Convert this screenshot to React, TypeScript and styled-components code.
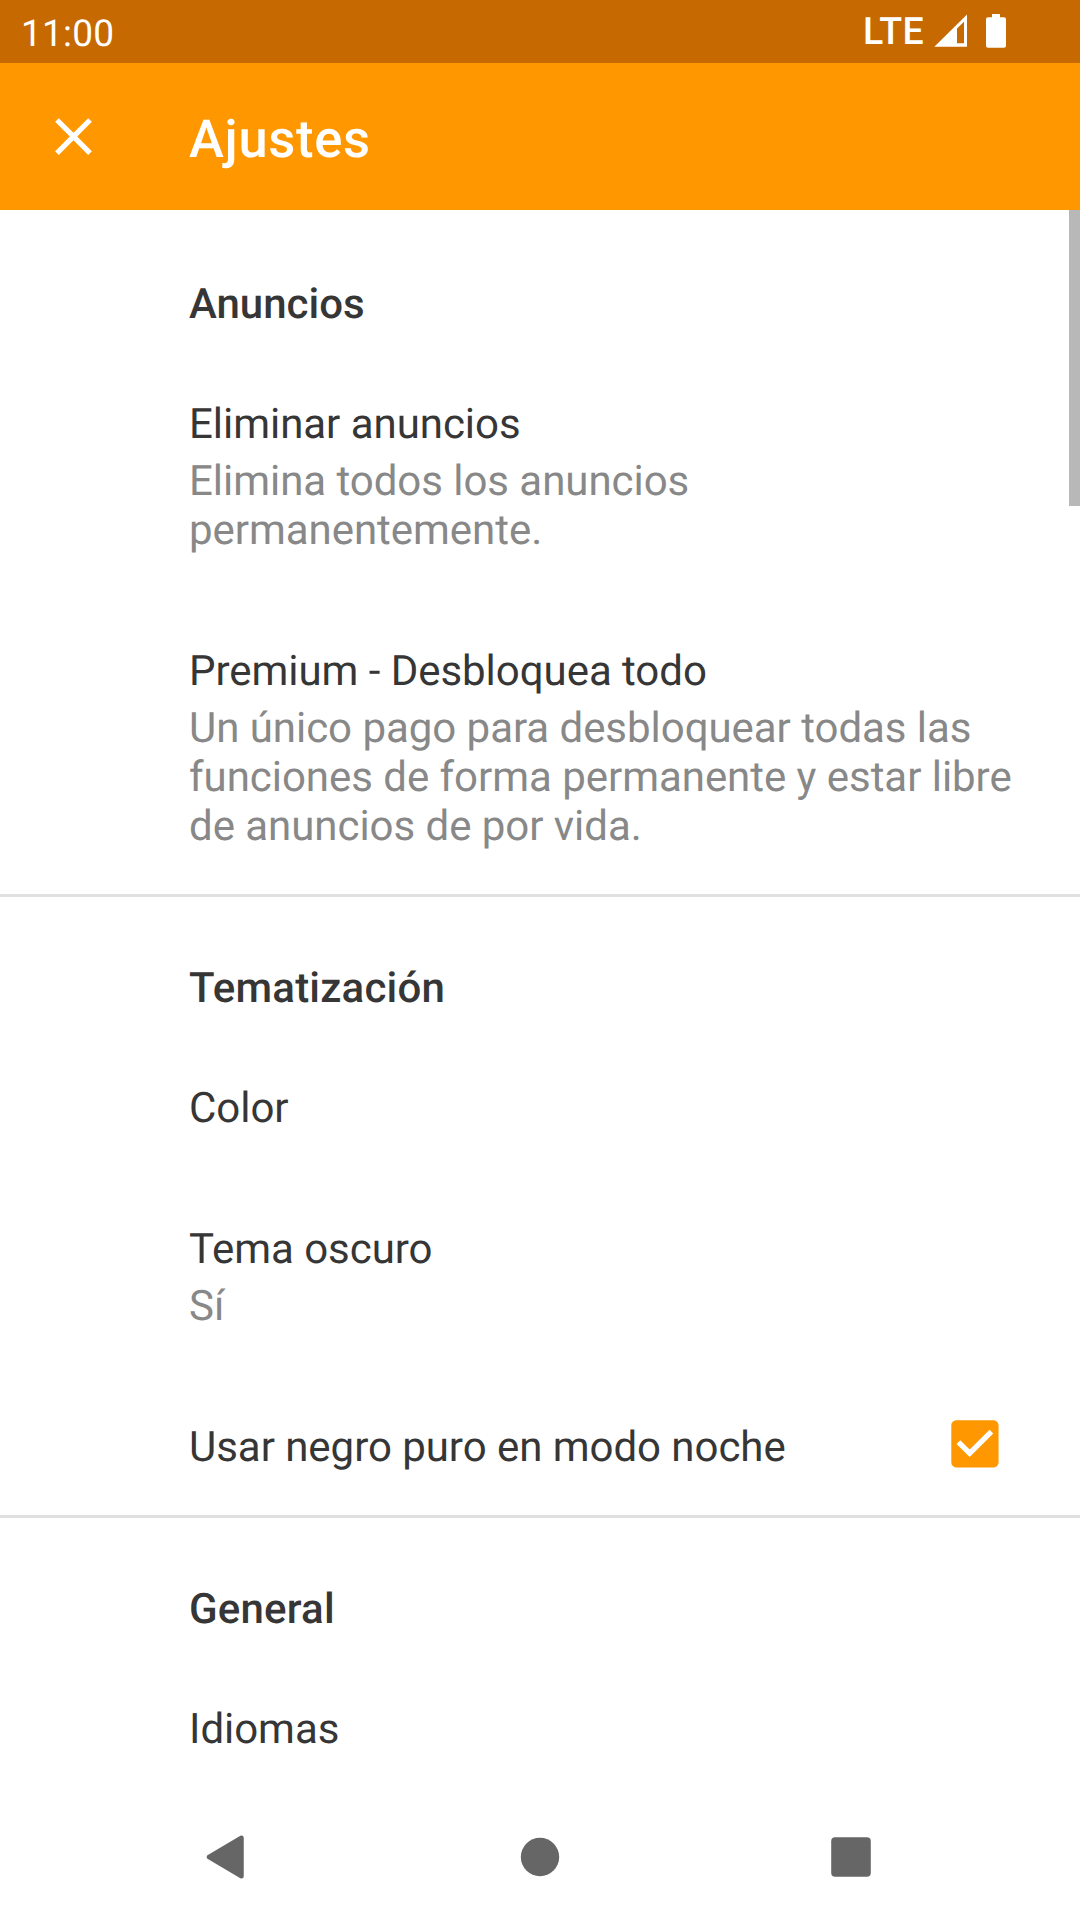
import React from "react";
import styled, { createGlobalStyle } from "styled-components";

const Global = createGlobalStyle`
  * { box-sizing: border-box; }
  body {
    margin: 0;
    background: #fff;
    font-family: Roboto, "Liberation Sans", sans-serif;
    text-rendering: geometricPrecision;
    overflow: hidden;
  }
  svg { display: block; flex-shrink: 0; }
`;

const Screen = styled.div`
  position: relative;
  width: 1080px;
  height: 1920px;
  display: flex;
  flex-direction: column;
  background: #fff;
  overflow: hidden;
`;

const StatusBar = styled.div`
  height: 63px;
  background: #c66900;
  color: #fff;
  display: flex;
  justify-content: space-between;
  padding: 0 74px 0 21px;
`;

const Clock = styled.span`
  padding-top: 13px;
  font-size: 37px;
  line-height: 44px;
  letter-spacing: 0.2px;
`;

const StatusIcons = styled.div`
  display: flex;
  align-items: flex-start;
`;

const Network = styled.span`
  padding-top: 10px;
  margin-right: 10px;
  font-size: 37.5px;
  line-height: 44px;
  font-weight: 500;
  letter-spacing: 0.4px;
`;

const Toolbar = styled.header`
  height: 147px;
  background: #ff9800;
  display: flex;
  align-items: center;
  padding-left: 42px;
  color: #fff;
`;

const Title = styled.h1`
  margin: 5px 0 0 84px;
  font-size: 52.5px;
  font-weight: 500;
  line-height: 62px;
  letter-spacing: 0.7px;
`;

const List = styled.main`
  flex: 1;
  padding-top: 3px;
  overflow: hidden;
`;

const Section = styled.section`
  & + & { border-top: 3px solid #e0e0e0; }
`;

const SectionTitle = styled.h2<{ $tracking?: number }>`
  margin: 0;
  padding: 67px 0 0 189px;
  height: 146px;
  font-size: 42px;
  line-height: 49px;
  font-weight: 500;
  letter-spacing: ${p => p.$tracking ?? 0}px;
  color: #363636;
`;

const Row = styled.div<{ $h: number }>`
  height: ${p => p.$h}px;
  padding: 41px 52px 0 189px;
  display: flex;
  justify-content: space-between;
  align-items: flex-start;
`;

const Label = styled.div`
  font-size: 42px;
  line-height: 49px;
  letter-spacing: -0.04px;
  color: #363636;
  white-space: nowrap;
`;

const Summary = styled.div`
  margin-top: 8px;
  font-size: 42px;
  line-height: 49px;
  letter-spacing: -0.04px;
  color: #888;
  white-space: pre;
`;

const Checkbox = styled.span`
  margin: -11px 22px 0 0;
`;

const NavBar = styled.nav`
  height: 126px;
  background: #fff;
  display: flex;
  align-items: center;
  padding-left: 206px;
`;

const HomeIcon = styled.svg`
  margin: 0 271px 0 276px;
`;

const Thumb = styled.div`
  position: absolute;
  right: 0;
  top: 210px;
  width: 11px;
  height: 296px;
  background: #b8b8b8;
`;

interface ItemProps {
  h: number;
  label: string;
  summary?: string;
  children?: React.ReactNode;
}

function Item({ h, label, summary, children }: ItemProps) {
  return (
    <Row $h={h}>
      <div>
        <Label>{label}</Label>
        {summary && <Summary>{summary}</Summary>}
      </div>
      {children}
    </Row>
  );
}

export default function App() {
  return (
    <>
      <Global />
      <Screen>
        <StatusBar>
          <Clock>11:00</Clock>
          <StatusIcons>
            <Network>LTE</Network>
            <svg width="72" height="63" viewBox="934 0 72 63" fill="#fff">
              <path fillRule="evenodd" d="M934.3 46.8L967 14.4V46.8ZM957 28.6V43.3H964V21.8Z" />
              <path d="M992 14H1000V17.3H1004Q1006 17.3 1006 19.3V45.7Q1006 47.8 1004 47.8H988Q986 47.8 986 45.7V19.3Q986 17.3 988 17.3H992Z" />
            </svg>
          </StatusIcons>
        </StatusBar>
        <Toolbar>
          <svg width="63" height="63" viewBox="0 0 24 24" fill="#fff">
            <path d="M19 6.41L17.59 5 12 10.59 6.41 5 5 6.41 10.59 12 5 17.59 6.41 19 12 13.41 17.59 19 19 17.59 13.41 12z" />
          </svg>
          <Title>Ajustes</Title>
        </Toolbar>
        <List>
          <Section>
            <SectionTitle>Anuncios</SectionTitle>
            <Item h={247} label="Eliminar anuncios" summary={"Elimina todos los anuncios\npermanentemente."} />
            <Item
              h={288}
              label="Premium - Desbloquea todo"
              summary={"Un único pago para desbloquear todas las\nfunciones de forma permanente y estar libre\nde anuncios de por vida."}
            />
          </Section>
          <Section>
            <SectionTitle $tracking={0.2}>Tematización</SectionTitle>
            <Item h={141} label="Color" />
            <Item h={198} label="Tema oscuro" summary="Sí" />
            <Item h={133} label="Usar negro puro en modo noche">
              <Checkbox>
                <svg width="63" height="63" viewBox="-0.16 -0.16 24 24" fill="#ff9800">
                  <path d="M19 3H5c-1.11 0-2 .9-2 2v14c0 1.1.89 2 2 2h14c1.11 0 2-.9 2-2V5c0-1.1-.89-2-2-2zm-9 14l-5-5 1.41-1.41L10 14.17l7.59-7.59L19 8l-9 9z" />
                </svg>
              </Checkbox>
            </Item>
          </Section>
          <Section>
            <SectionTitle $tracking={0.2}>General</SectionTitle>
            <Item h={129} label="Idiomas" />
          </Section>
        </List>
        <NavBar>
          <svg width="38" height="44" viewBox="0 0 38 44">
            <path d="M3 22L35.5 2.8V41.2Z" fill="#666" stroke="#666" strokeWidth="4.5" strokeLinejoin="round" />
          </svg>
          <HomeIcon width="40" height="40" viewBox="0 0 40 40">
            <circle cx="20" cy="20" r="19.2" fill="#666" />
          </HomeIcon>
          <svg width="40" height="40" viewBox="0 0 40 40">
            <rect x="0.2" y="0.2" width="39.6" height="39.6" rx="4" fill="#666" />
          </svg>
        </NavBar>
        <Thumb />
      </Screen>
    </>
  );
}
